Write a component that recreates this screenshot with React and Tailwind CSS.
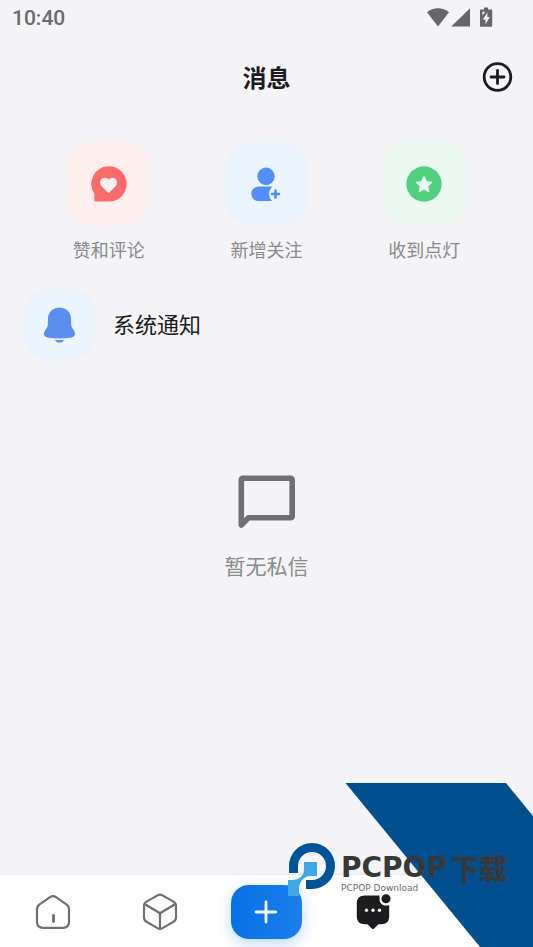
const SHORTCUTS = [
  { id: "likes", label: "赞和评论", tile: "bg-[#ffefee]", Icon: LikeIcon },
  { id: "follows", label: "新增关注", tile: "bg-[#ebf3ff]", Icon: FollowIcon },
  { id: "lights", label: "收到点灯", tile: "bg-[#ebf9f1]", Icon: LightIcon },
];

/* ======================
   ICONS
====================== */

function LikeIcon() {
  return (
    <svg width="36" height="36" viewBox="0 0 36 36">
      <path d="M18 0.2a17.7 17.7 0 0 1 0 35.4H3.4V27.8A17.7 17.7 0 0 1 18 0.2z" fill="#ff6b6b" />
      <path
        d="M17.6 27.2L10.8 20.6C8.500 18.200 8.600 15 10.600 13.100C12.600 11.200 15.800 11.400 17.600 13.700C19.400 11.400 22.600 11.200 24.600 13.100C26.600 15 26.700 18.200 24.400 20.600z"
        fill="#ffefee"
      />
    </svg>
  );
}

function FollowIcon() {
  return (
    <svg width="36" height="36" viewBox="0 0 36 36" fill="#528eff">
      <circle cx="18" cy="10.300" r="8.700" />
      <path d="M10.500 20.500H24.500a10 10 0 0 0-.5 14.500H10.500a7.250 7.250 0 0 1 0-14.500z" />
      <path d="M27.500 24.500v7M24 28h7" stroke="#528eff" strokeWidth="2.600" strokeLinecap="round" />
    </svg>
  );
}

function LightIcon() {
  return (
    <svg width="36" height="36" viewBox="0 0 36 36">
      <circle cx="18" cy="18" r="17.700" fill="#4fd080" />
      <path
        d="M18 10.800l2.300 4.900 5.200.7-3.800 3.700.9 5.300-4.600-2.500-4.600 2.500.9-5.300-3.800-3.700 5.200-.7z"
        fill="#ebf9f1"
        stroke="#ebf9f1"
        strokeWidth="1.400"
        strokeLinejoin="round"
      />
    </svg>
  );
}

function BellIcon() {
  return (
    <svg width="36" height="36" viewBox="0 0 36 36" fill="#5b8def">
      <path d="M17.500 .6c6.800 0 11.600 5 11.600 11.500v4.500c0 3 .9 4.300 2.500 6.400 1.400 1.900 1.800 4 1 5.600-.8 1.700-2.600 1.900-4.300 2.100-7.200 1.100-14.400 1.100-21.600 0-1.700-.2-3.500-.4-4.300-2.100-.8-1.600-.4-3.700 1-5.600 1.600-2.100 2.500-3.400 2.500-6.400v-4.500C5.900 5.600 10.700.6 17.500.6z" />
      <path d="M12.800 32.700c3 .5 6.400.5 9.400 0-1.100 1.900-2.700 2.900-4.700 2.900s-3.600-1-4.700-2.900z" />
    </svg>
  );
}

function StatusIcons() {
  return (
    <svg width="66" height="22" viewBox="0 0 66 22" fill="#666668">
      <path d="M0 5.200C3 2.600 7 1.200 11 1.200s8 1.400 11 4L11 19.400z" />
      <path d="M43 1.300v18.300H24.300z" />
      <path d="M57 .5h4v2h3.200c.6 0 1 .4 1 1v15.200c0 .6-.4 1-1 1H54c-.6 0-1-.4-1-1V3.500c0-.6.4-1 1-1h3z" />
      <path d="M60.500 5.200l-4.700 7.300h2.700v4.800l4.400-7.300h-2.700z" fill="#f4f4f7" />
      <path d="M55.200 4.800h3l-2.600 3.600z" fill="#f4f4f7" />
    </svg>
  );
}

function AddIcon() {
  return (
    <svg width="32" height="32" viewBox="0 0 32 32" fill="none" stroke="#1c1c1f" strokeWidth="2.800" strokeLinecap="round">
      <circle cx="16.500" cy="16" r="13.300" />
      <path d="M16.500 9.500v13M10 16h13" />
    </svg>
  );
}

function EmptyIcon() {
  return (
    <svg width="58" height="54" viewBox="0 0 58 54" fill="none" stroke="#6f6f74" strokeWidth="5.600" strokeLinejoin="round">
      <path d="M5 3.300h47.700a1.500 1.500 0 0 1 1.500 1.500v36.400a1.500 1.500 0 0 1-1.500 1.500H10.500L3.300 50V4.800A1.500 1.500 0 0 1 5 3.300z" />
    </svg>
  );
}

function HomeIcon() {
  return (
    <svg width="36" height="36" viewBox="0 0 36 36" fill="none" stroke="#6f6f74" strokeWidth="2.200" strokeLinecap="round" strokeLinejoin="round">
      <path d="M15 3.200L4.600 10.300C2.600 11.700 2 13 2 15.200v12.600c0 4 2 6 6 6h20c4 0 6-2 6-6V15.200c0-2.200-.6-3.500-2.600-4.900L21 3.200c-2.200-1.500-3.800-1.500-6 0z" />
      <path d="M18.500 21.500v6" strokeWidth="2.800" />
    </svg>
  );
}

function BoxIcon() {
  return (
    <svg width="36" height="38" viewBox="0 0 36 38" fill="none" stroke="#6f6f74" strokeWidth="2.200" strokeLinecap="round" strokeLinejoin="round">
      <path d="M15.500 2.400L4.500 8.600C2.600 9.700 2 10.800 2 12.800v11.800c0 2 .6 3.100 2.500 4.200l11 6.300c1.800 1.100 3.200 1.100 5 0l11-6.300c1.900-1.100 2.500-2.200 2.500-4.200V12.800c0-2-.6-3.100-2.500-4.200l-11-6.200c-1.800-1-3.200-1-5 0z" />
      <path d="M3.500 11.500L18 20.300l14.500-8.800M18 20.300V35" />
    </svg>
  );
}

function ChatIcon() {
  return (
    <svg width="36" height="36" viewBox="0 0 36 36">
      <path d="M10 1.500h14.500v3.500c0 4 2.500 6.500 6.500 6.500h3.200V22c0 5.500-2.700 8.200-8.200 8.200h-2.500l-4.300 4.200c-.8.800-1.600.8-2.400 0l-4.300-4.200H10c-5.500 0-8.200-2.700-8.200-8.200V9.700c0-5.500 2.700-8.200 8.200-8.200z" fill="#1c1c1f" />
      <circle cx="31" cy="4.800" r="4.500" fill="#1c1c1f" />
      <g fill="#fff">
        <circle cx="11.500" cy="16.300" r="1.700" />
        <circle cx="18" cy="16.300" r="1.700" />
        <circle cx="24.500" cy="16.300" r="1.700" />
      </g>
    </svg>
  );
}

/* ======================
   PCPOP BADGE
====================== */

function PcpopBadge() {
  return (
    <div className="pointer-events-none absolute right-0 bottom-0 overflow-hidden">
      <svg width="188" height="164" viewBox="0 0 188 164" className="ml-[57px]">
        <path d="M0.500 0H161l27 33v131H135z" fill="#00508f" />
      </svg>
      <div className="absolute bottom-[49px] left-0 flex items-end gap-1">
        <svg width="49" height="56" viewBox="0 0 49 56" className="shrink-0">
          <path d="M1 31v-7a23 23 0 1 1 23 23h-6v-9h6a14 14 0 1 0-14-14v7z" fill="#00529a" />
          <path d="M16 20h13v14h-7c-8 1-10 6-11 12v8H0V38h4c7 0 12-4 12-11z" fill="#3da8e4" />
        </svg>
        <div className="flex items-start gap-1 pb-1 whitespace-nowrap text-[#38383a]">
          <div>
            <div className="font-['DejaVu_Sans',sans-serif] text-[28px] leading-7 font-bold">PCPOP</div>
            <div className="font-['DejaVu_Sans',sans-serif] text-[9px] leading-3 text-[#6a6a6c]">
              PCPOP Download
            </div>
          </div>
          <div className="text-[28px] leading-7 font-black">下载</div>
        </div>
      </div>
    </div>
  );
}

/* ======================
   PAGE
====================== */

export default function App() {
  return (
    <div className="relative flex min-h-screen flex-col bg-[#f4f4f7] font-['Noto_Sans_CJK_SC',sans-serif] text-[#1c1c1f]">
      <div className="flex h-9 items-center justify-between pr-10 pl-3">
        <span className="pt-0.5 font-[Roboto,sans-serif] text-[21px] font-medium text-[#6a6a6c]">10:40</span>
        <StatusIcons />
      </div>

      <header className="grid h-[82px] grid-cols-[1fr_auto_1fr] items-center px-5">
        <h1 className="col-start-2 text-2xl font-bold">消息</h1>
        <button aria-label="添加" className="justify-self-end">
          <AddIcon />
        </button>
      </header>

      <main className="flex-1">
        <div className="grid grid-cols-3 px-[30px] pt-6">
          {SHORTCUTS.map(({ id, label, tile, Icon }) => (
            <button key={id} className="flex flex-col items-center gap-3">
              <span className={`flex size-[83px] items-center justify-center rounded-[26px] ${tile}`}>
                <Icon />
              </span>
              <span className="text-lg leading-6 text-[#8a8a8d]">{label}</span>
            </button>
          ))}
        </div>

        <button className="mt-7 flex w-full items-center gap-[18px] px-6 text-left">
          <span className="flex size-[71px] items-center justify-center rounded-3xl bg-[#ebf3ff]">
            <BellIcon />
          </span>
          <span className="pb-1 text-[22px] leading-7">系统通知</span>
        </button>

        <div className="mt-[115px] flex flex-col items-center gap-6">
          <EmptyIcon />
          <p className="text-[21px] leading-6 text-[#8a8a8d]">暂无私信</p>
        </div>
      </main>

      <nav className="grid h-[73px] grid-cols-5 place-items-center border-t border-[#ebebee] bg-white pt-px">
        <button aria-label="首页">
          <HomeIcon />
        </button>
        <button aria-label="发现">
          <BoxIcon />
        </button>
        <button
          aria-label="发布"
          className="flex h-[54px] w-[71px] items-center justify-center rounded-[18px] bg-linear-to-r from-[#0571e6] to-[#1a7eea] shadow-[0_4px_14px_rgba(10,120,240,0.3)]"
        >
          <svg width="24" height="24" viewBox="0 0 24 24" stroke="#fff" strokeWidth="2.800" strokeLinecap="round">
            <path d="M12 2v20M2 12h20" />
          </svg>
        </button>
        <button aria-label="消息">
          <ChatIcon />
        </button>
        <button aria-label="我的" className="size-7" />
      </nav>

      <PcpopBadge />
    </div>
  );
}
